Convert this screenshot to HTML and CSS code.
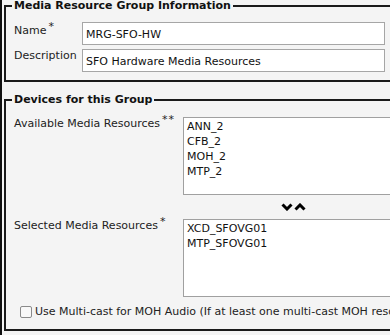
FILE: index.html
```html
<!DOCTYPE html>
<html lang="en">
<head>
  <meta charset="UTF-8">
  <meta name="viewport" content="width=device-width, initial-scale=1.0">
  <title>Media Resource Group Configuration</title>
  <link rel="stylesheet" href="styles.css">
</head>
<body>
<div class="page">
  <fieldset class="group group-info">
    <legend>Media Resource Group Information</legend>
    <div class="row row-name">
      <label class="label label-short" for="mrgname">Name<sup>*</sup></label>
      <input type="text" id="mrgname" class="text-field" value="MRG-SFO-HW">
    </div>
    <div class="row row-desc">
      <label class="label label-short label-desc" for="mrgdesc">Description</label>
      <input type="text" id="mrgdesc" class="text-field" value="SFO Hardware Media Resources">
    </div>
  </fieldset>

  <fieldset class="group group-devices">
    <legend>Devices for this Group</legend>
    <div class="row row-available">
      <span class="label label-long">Available Media Resources<sup>**</sup></span>
      <div class="listbox">
        <div class="option">ANN_2</div>
        <div class="option">CFB_2</div>
        <div class="option">MOH_2</div>
        <div class="option">MTP_2</div>
      </div>
    </div>
    <div class="movers">
      <svg class="mover" width="12" height="8" viewBox="0 0 12 8"><polyline points="1.5,1.5 6,6 10.5,1.5" /></svg>
      <svg class="mover" width="12" height="8" viewBox="0 0 12 8"><polyline points="1.5,6.5 6,2 10.5,6.5" /></svg>
    </div>
    <div class="row row-selected">
      <span class="label label-long">Selected Media Resources<sup>*</sup></span>
      <div class="listbox">
        <div class="option">XCD_SFOVG01</div>
        <div class="option">MTP_SFOVG01</div>
      </div>
    </div>
    <div class="check-row">
      <span class="checkbox"></span>
      <span class="check-text">Use Multi-cast for MOH Audio (If at least one multi-cast MOH resource is available)</span>
    </div>
  </fieldset>
</div>
</body>
</html>
```

FILE: styles.css
```css
*{
  box-sizing: border-box;
}
html, body{
  margin: 0;
  padding: 0;
  background-color: #f4f4f4;
  height: 100%;
  overflow: hidden;
}
body{
  font-family: Verdana, "DejaVu Sans", sans-serif;
  font-size: 11px;
  color: #222;
}
.page{
  border-left: 2px solid #111;
  padding-left: 2px;
  height: 100%;
  width: 440px;
}
.group{
  margin: 0;
  width: 430px;
  border: 2px solid #1a1a1a;
  padding: 0 0 8px 8px;
  min-inline-size: auto;
}
.group legend{
  font-size: 11px;
  font-weight: bold;
  line-height: 12px;
  padding: 0 2px;
  margin-left: -2px;
  color: #111;
}
.group-devices{
  margin-top: 12px;
  padding-bottom: 11px;
}
.row{
  display: flex;
  align-items: flex-start;
}
.row-name{
  margin-top: 10px;
}
.row-desc{
  margin-top: 4px;
}
.label{
  line-height: 13px;
  white-space: nowrap;
}
.label sup{
  font-size: 11px;
  line-height: 0;
  vertical-align: 4px;
  margin-left: 2px;
  letter-spacing: 1px;
}
.label-short{
  width: 68px;
  padding-top: 2px;
}
.label-desc{
  padding-top: 0;
}
.label-long{
  width: 169px;
  padding-top: 0;
}
.text-field{
  width: 303px;
  height: 23px;
  border: 1px solid #a6a6a6;
  background-color: #fff;
  padding: 1px 3px 0;
  font-family: inherit;
  font-size: 11px;
  color: #111;
  outline: none;
}
.row-available{
  margin-top: 11px;
}
.listbox{
  width: 220px;
  height: 78px;
  border: 1px solid #a0a0a0;
  background-color: #fff;
  padding: 1px 3px;
  color: #111;
}
.option{
  line-height: 15px;
}
.movers{
  margin-left: 169px;
  width: 220px;
  height: 24px;
  display: flex;
  justify-content: center;
  align-items: center;
  gap: 1px;
}
.mover polyline{
  fill: none;
  stroke: #000;
  stroke-width: 3;
  stroke-linecap: butt;
  stroke-linejoin: miter;
}
.check-row{
  margin-top: 8px;
  padding-left: 6px;
  display: flex;
  align-items: center;
  gap: 3px;
  white-space: nowrap;
  line-height: 13px;
}
.checkbox{
  width: 12px;
  height: 12px;
  border: 1px solid #8a8a8a;
  border-radius: 2px;
  background-color: #f8f8f8;
  flex: none;
}
```
